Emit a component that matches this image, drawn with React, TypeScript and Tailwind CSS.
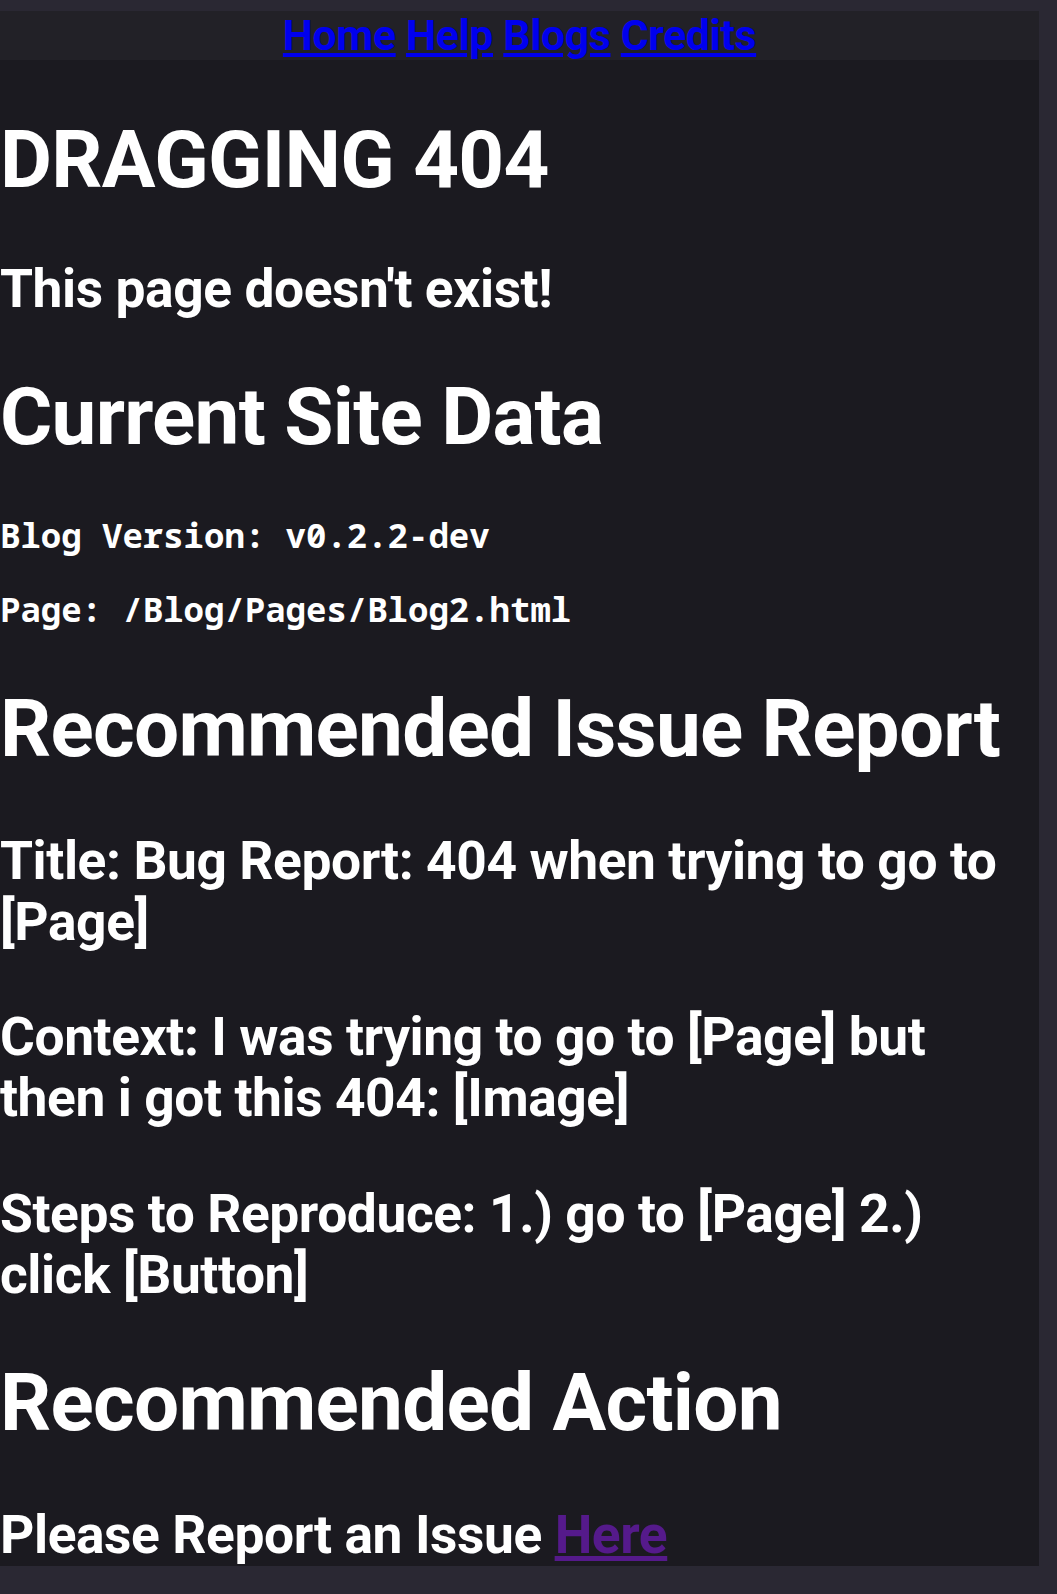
export default function App() {
  const h = "text-[80px] leading-[94px] tracking-[-0.009em]";
  const t = "text-[53.33px] leading-[61px] tracking-[-0.008em]";
  const mono = "font-['Noto_Sans_Mono','DejaVu_Sans_Mono',monospace] text-[34px] leading-[40px]";
  return (
    <div className="min-h-[1594px] bg-[#2a2833] pt-[11px] pb-[29px] font-[Roboto,sans-serif]">
      <div className="w-[1039px]">
        <nav className="bg-[#222127] h-[49px] text-center text-[42.67px] font-bold leading-[49px] tracking-[-0.008em]">
          <a href="#" className="text-[#0000ee] underline">Home</a>{" "}
          <a href="#" className="text-[#0000ee] underline">Help</a>{" "}
          <a href="#" className="text-[#0000ee] underline">Blogs</a>{" "}
          <a href="#" className="text-[#0000ee] underline">Credits</a>
        </nav>
        <main className="bg-[#1b1a20] text-white font-bold flex flex-col pt-[52.5px]">
          <h1 className={h}>DRAGGING 404</h1>
          <p className={`mt-[52px] ${t}`}>This page doesn't exist!</p>
          <h2 className={`mt-[50.7px] ${h}`}>Current Site Data</h2>
          <p className={`mt-[50.5px] ${mono}`}>Blog Version: v0.2.2-dev</p>
          <p className={`mt-[34.5px] ${mono}`}>Page: /Blog/Pages/Blog2.html</p>
          <h2 className={`mt-[53px] ${h}`}>Recommended Issue Report</h2>
          <p className={`mt-[55px] ${t}`}>Title: Bug Report: 404 when trying to go to [Page]</p>
          <p className={`mt-[54px] ${t}`}>Context: I was trying to go to [Page] but then i got this 404: [Image]</p>
          <p className={`mt-[55px] ${t}`}>Steps to Reproduce: 1.) go to [Page] 2.) click [Button]</p>
          <h2 className={`mt-[50px] ${h}`}>Recommended Action</h2>
          <p className={`mt-[55px] ${t}`}>
            Please Report an Issue{" "}
            <a href="#" className="text-[#551a8b] underline">Here</a>
          </p>
        </main>
      </div>
    </div>
  );
}
